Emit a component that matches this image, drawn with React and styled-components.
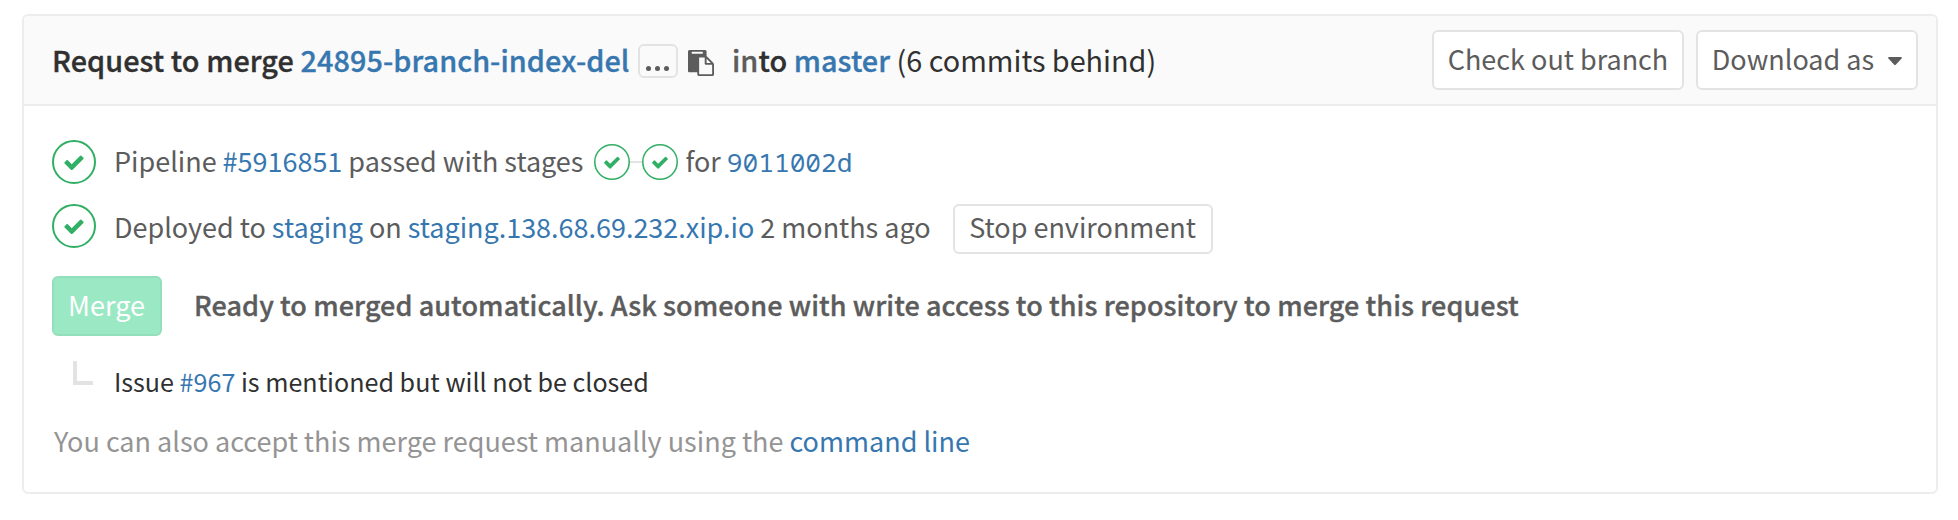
import React from "react";
import styled, { createGlobalStyle } from "styled-components";

const colors = {
  text: "#5c5c5c",
  dark: "#303030",
  muted: "#949494",
  link: "#3777b0",
  border: "#ededed",
  control: "#e3e3e3",
  green: "#31af64",
};

const GlobalStyle = createGlobalStyle`
  * { box-sizing: border-box; }
  body {
    margin: 0;
    background: #fff;
    font-family: "Noto Sans CJK SC", "Noto Sans", sans-serif;
    font-size: 27px;
    line-height: 36px;
    color: ${colors.text};
  }
`;

const Page = styled.main`
  padding: 14px 20px 26px 22px;
`;

const Widget = styled.section`
  height: 480px;
  border: 2px solid ${colors.border};
  border-radius: 6px;
  background: #fff;
  overflow: hidden;
`;

const Header = styled.header`
  display: flex;
  align-items: center;
  justify-content: space-between;
  height: 90px;
  padding: 0 18px 0 28px;
  background: #fafafa;
  border-bottom: 2px solid ${colors.border};
`;

const Title = styled.h1`
  display: flex;
  align-items: center;
  margin: 0;
  font-size: 28.8px;
  font-weight: 500;
  white-space: pre;
  color: ${colors.dark};
`;

const Strong = styled.span`
  font-weight: 500;
  letter-spacing: 0.075px;
  -webkit-text-stroke: 0.35px currentColor;
`;

const Gray = styled.span`
  color: ${colors.text};
`;

const Behind = styled.span`
  font-weight: 400;
`;

const Link = styled.a`
  color: ${colors.link};
  text-decoration: none;
`;

const Expander = styled.button`
  display: flex;
  align-items: flex-end;
  justify-content: center;
  gap: 4px;
  width: 40px;
  height: 34px;
  margin: 1px 10px 0 8.5px;
  padding: 0 1px 5px 0;
  border: 2px solid ${colors.control};
  border-radius: 6px;
  background: #fafafa;
`;

const Dot = styled.i`
  width: 5px;
  height: 5px;
  border-radius: 50%;
  background: ${colors.text};
`;

const CopyIcon = styled.svg`
  width: 26px;
  height: 26px;
  margin: 5px 18px 0 0;
  fill: ${colors.text};
`;

const Actions = styled.div`
  display: flex;
  gap: 12px;
`;

const Button = styled.button`
  display: flex;
  align-items: center;
  justify-content: center;
  width: ${(p) => p.$width}px;
  height: 60px;
  padding: 0 0 2px;
  border: 2px solid ${colors.control};
  border-radius: 6px;
  background: #fff;
  font: inherit;
  color: ${colors.text};
  white-space: nowrap;
`;

const MergeButton = styled(Button)`
  padding-right: 1px;
  background: #9be8c5;
  border-color: #94dfbb;
  color: #fff;
`;

const StopButton = styled(Button)`
  height: 50px;
  margin: 6px 0 0 22px;
  padding-bottom: 4px;
`;

const Caret = styled.svg`
  width: 14px;
  height: 8px;
  margin: 4px 0 0 14px;
  fill: ${colors.text};
`;

const Body = styled.div`
  padding: 34px 28px 0;
`;

const StatusRow = styled.div`
  display: flex;
  align-items: center;
  height: ${(p) => p.$height}px;
  margin-bottom: ${(p) => p.$gap}px;
`;

const Copy = styled.div`
  white-space: pre;
  letter-spacing: ${(p) => (p.$tight ? "-0.02px" : "normal")};
  padding-top: ${(p) => p.$drop || 0}px;
  padding-bottom: ${(p) => p.$lift || 0}px;
  margin-left: ${(p) => p.$left || 0}px;
`;

const Circle = styled.svg`
  width: ${(p) => p.$size}px;
  height: ${(p) => p.$size}px;
  flex: none;
  fill: ${colors.green};
`;

const Stages = styled.div`
  display: flex;
  align-items: center;
  margin: 0 7px 0 11px;
`;

const Connector = styled.div`
  width: 12px;
  height: 2px;
  background: ${colors.control};
`;

const Sha = styled(Link)`
  font-family: "Noto Sans Mono", "DejaVu Sans Mono", monospace;
  font-size: 26.2px;
  line-height: 1;
`;

const Issues = styled.div`
  display: flex;
  height: 38px;
  margin: 25px 0 24px;
  padding-left: 21px;
  font-size: 25.1px;
  color: ${colors.dark};
`;

const Elbow = styled.span`
  width: 20px;
  height: 24px;
  margin-right: 21px;
  border: solid ${colors.control};
  border-width: 0 0 4px 4px;
`;

const Manual = styled.p`
  margin: 0 0 0 2px;
  white-space: pre;
  color: ${colors.muted};
`;

function Passed({ size, stroke = 0.64 }) {
  return (
    <Circle $size={size} viewBox="0 0 14 14">
      <circle cx="7" cy="7" r={7 - stroke / 2} fill="none" stroke={colors.green} strokeWidth={stroke} />
      <path d="M6.278 7.697L5.045 6.464a.296.296 0 0 0-.42-.002l-.613.614a.298.298 0 0 0 .002.42l1.91 1.909a.5.5 0 0 0 .703.005l.265-.265L9.997 6.04a.291.291 0 0 0-.009-.408l-.614-.614a.29.29 0 0 0-.408-.009L6.278 7.697z" />
    </Circle>
  );
}

export default function App() {
  return (
    <Page>
      <GlobalStyle />
      <Widget>
        <Header>
          <Title>
            <Strong>Request to merge </Strong>
            <Link><Strong>24895-branch-index-del</Strong></Link>
            <Expander aria-label="Show full branch name"><Dot /><Dot /><Dot /></Expander>
            <CopyIcon viewBox="0 0 1792 1792">
              <path d="M768 1664h896v-640h-416q-40 0-68-28t-28-68v-416h-384v1152zm256-1440v-64q0-13-9.5-22.5t-22.5-9.5h-704q-13 0-22.5 9.5t-9.5 22.5v64q0 13 9.5 22.5t22.5 9.5h704q13 0 22.5-9.5t9.5-22.5zm256 672h299l-299-299v299zm512 128v672q0 40-28 68t-68 28h-960q-40 0-68-28t-28-68v-160h-544q-40 0-68-28t-28-68v-1344q0-40 28-68t68-28h1088q40 0 68 28t28 68v328q21 13 36 28l408 408q28 28 48 76t20 88z" />
            </CopyIcon>
            <Strong><Gray>in</Gray>to </Strong>
            <Link><Strong>master</Strong></Link>
            <Behind> (6 commits behind)</Behind>
          </Title>
          <Actions>
            <Button $width={252}>Check out branch</Button>
            <Button $width={222}>
              Download as
              <Caret viewBox="0 0 14 8"><path d="M1 0h12q1.4.3.6 1.4L8 7.4q-1 1-2 0L.4 1.4Q-.4.3 1 0z" /></Caret>
            </Button>
          </Actions>
        </Header>
        <Body>
          <StatusRow $height={44} $gap={20}>
            <Passed size={44} />
            <Copy $left={18} $lift={2} $tight>Pipeline <Link>#5916851</Link> passed with stages</Copy>
            <Stages>
              <Passed size={36} stroke={0.6} />
              <Connector />
              <Passed size={36} stroke={0.6} />
            </Stages>
            <Copy $lift={2}>for <Sha>9011002d</Sha></Copy>
          </StatusRow>
          <StatusRow $height={44} $gap={28}>
            <Passed size={44} />
            <Copy $left={18} $drop={2} $tight>Deployed to <Link>staging</Link> on <Link>staging.138.68.69.232.xip.io</Link> 2 months ago</Copy>
            <StopButton $width={260}>Stop environment</StopButton>
          </StatusRow>
          <StatusRow $height={60} $gap={0}>
            <MergeButton $width={110} disabled>Merge</MergeButton>
            <Copy $left={32} $lift={2}>
              <Strong>Ready to merged automatically. Ask someone with write access to this repository to merge this request</Strong>
            </Copy>
          </StatusRow>
          <Issues>
            <Elbow />
            <Copy $drop={2}>Issue <Link>#967</Link> is mentioned but will not be closed</Copy>
          </Issues>
          <Manual>You can also accept this merge request manually using the <Link>command line</Link></Manual>
        </Body>
      </Widget>
    </Page>
  );
}
